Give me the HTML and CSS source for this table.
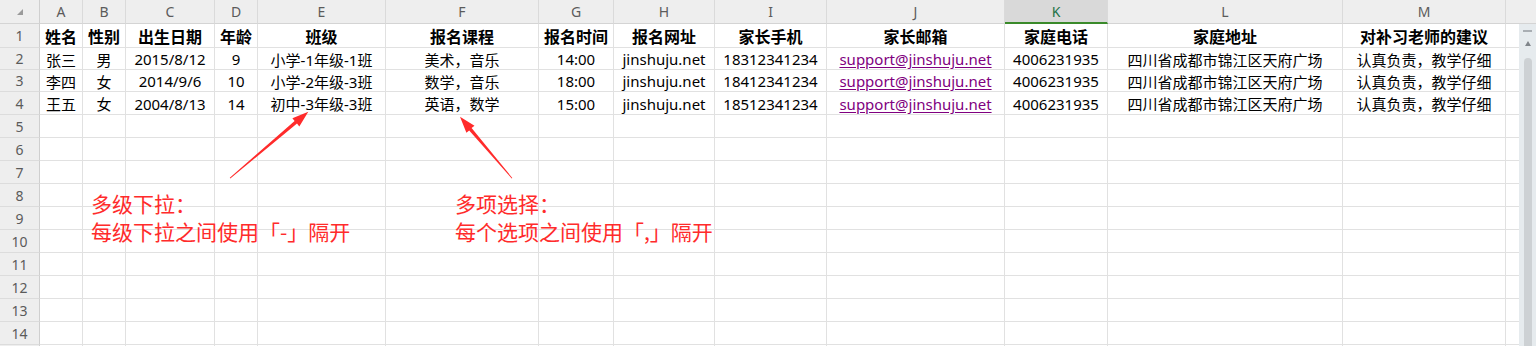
FILE: index.html
```html
<!DOCTYPE html>
<html lang="zh-CN">
<head>
<meta charset="utf-8">
<title>报名表</title>
<link rel="stylesheet" href="styles.css">
</head>
<body>
<div class="sheet">
  <div class="colhdr">
    <div class="corner"><svg width="8" height="8" viewBox="0 0 8 8"><polygon points="1,7 7,7 7,1" fill="#9a9a9a"/></svg></div>
    <div class="h">A</div><div class="h">B</div><div class="h">C</div><div class="h">D</div><div class="h">E</div><div class="h">F</div><div class="h">G</div><div class="h">H</div><div class="h">I</div><div class="h">J</div><div class="h sel">K</div><div class="h">L</div><div class="h">M</div><div class="h end"></div>
  </div>
  <div class="body">
    <div class="rows">
      <div class="row r1 bold"><div class="rn">1</div><div class="c">姓名</div><div class="c">性别</div><div class="c">出生日期</div><div class="c">年龄</div><div class="c">班级</div><div class="c">报名课程</div><div class="c">报名时间</div><div class="c">报名网址</div><div class="c">家长手机</div><div class="c">家长邮箱</div><div class="c">家庭电话</div><div class="c">家庭地址</div><div class="c">对补习老师的建议</div><div class="c"></div></div>
      <div class="row r2"><div class="rn">2</div><div class="c">张三</div><div class="c">男</div><div class="c">2015/8/12</div><div class="c">9</div><div class="c">小学-1年级-1班</div><div class="c">美术，音乐</div><div class="c">14:00</div><div class="c">jinshuju.net</div><div class="c">18312341234</div><div class="c"><span class="link">support@jinshuju.net</span></div><div class="c">4006231935</div><div class="c">四川省成都市锦江区天府广场</div><div class="c">认真负责，教学仔细</div><div class="c"></div></div>
      <div class="row r3"><div class="rn">3</div><div class="c">李四</div><div class="c">女</div><div class="c">2014/9/6</div><div class="c">10</div><div class="c">小学-2年级-3班</div><div class="c">数学，音乐</div><div class="c">18:00</div><div class="c">jinshuju.net</div><div class="c">18412341234</div><div class="c"><span class="link">support@jinshuju.net</span></div><div class="c">4006231935</div><div class="c">四川省成都市锦江区天府广场</div><div class="c">认真负责，教学仔细</div><div class="c"></div></div>
      <div class="row"><div class="rn">4</div><div class="c">王五</div><div class="c">女</div><div class="c">2004/8/13</div><div class="c">14</div><div class="c">初中-3年级-3班</div><div class="c">英语，数学</div><div class="c">15:00</div><div class="c">jinshuju.net</div><div class="c">18512341234</div><div class="c"><span class="link">support@jinshuju.net</span></div><div class="c">4006231935</div><div class="c">四川省成都市锦江区天府广场</div><div class="c">认真负责，教学仔细</div><div class="c"></div></div>
      <div class="row"><div class="rn">5</div><div class="c"></div><div class="c"></div><div class="c"></div><div class="c"></div><div class="c"></div><div class="c"></div><div class="c"></div><div class="c"></div><div class="c"></div><div class="c"></div><div class="c"></div><div class="c"></div><div class="c"></div><div class="c"></div></div>
      <div class="row"><div class="rn">6</div><div class="c"></div><div class="c"></div><div class="c"></div><div class="c"></div><div class="c"></div><div class="c"></div><div class="c"></div><div class="c"></div><div class="c"></div><div class="c"></div><div class="c"></div><div class="c"></div><div class="c"></div><div class="c"></div></div>
      <div class="row"><div class="rn">7</div><div class="c"></div><div class="c"></div><div class="c"></div><div class="c"></div><div class="c"></div><div class="c"></div><div class="c"></div><div class="c"></div><div class="c"></div><div class="c"></div><div class="c"></div><div class="c"></div><div class="c"></div><div class="c"></div></div>
      <div class="row"><div class="rn">8</div><div class="c"></div><div class="c"></div><div class="c"></div><div class="c"></div><div class="c"></div><div class="c"></div><div class="c"></div><div class="c"></div><div class="c"></div><div class="c"></div><div class="c"></div><div class="c"></div><div class="c"></div><div class="c"></div></div>
      <div class="row"><div class="rn">9</div><div class="c"></div><div class="c"></div><div class="c"></div><div class="c"></div><div class="c"></div><div class="c"></div><div class="c"></div><div class="c"></div><div class="c"></div><div class="c"></div><div class="c"></div><div class="c"></div><div class="c"></div><div class="c"></div></div>
      <div class="row"><div class="rn">10</div><div class="c"></div><div class="c"></div><div class="c"></div><div class="c"></div><div class="c"></div><div class="c"></div><div class="c"></div><div class="c"></div><div class="c"></div><div class="c"></div><div class="c"></div><div class="c"></div><div class="c"></div><div class="c"></div></div>
      <div class="row"><div class="rn">11</div><div class="c"></div><div class="c"></div><div class="c"></div><div class="c"></div><div class="c"></div><div class="c"></div><div class="c"></div><div class="c"></div><div class="c"></div><div class="c"></div><div class="c"></div><div class="c"></div><div class="c"></div><div class="c"></div></div>
      <div class="row"><div class="rn">12</div><div class="c"></div><div class="c"></div><div class="c"></div><div class="c"></div><div class="c"></div><div class="c"></div><div class="c"></div><div class="c"></div><div class="c"></div><div class="c"></div><div class="c"></div><div class="c"></div><div class="c"></div><div class="c"></div></div>
      <div class="row"><div class="rn">13</div><div class="c"></div><div class="c"></div><div class="c"></div><div class="c"></div><div class="c"></div><div class="c"></div><div class="c"></div><div class="c"></div><div class="c"></div><div class="c"></div><div class="c"></div><div class="c"></div><div class="c"></div><div class="c"></div></div>
      <div class="row"><div class="rn">14</div><div class="c"></div><div class="c"></div><div class="c"></div><div class="c"></div><div class="c"></div><div class="c"></div><div class="c"></div><div class="c"></div><div class="c"></div><div class="c"></div><div class="c"></div><div class="c"></div><div class="c"></div><div class="c"></div></div>
      <div class="row"><div class="rn"></div><div class="c"></div><div class="c"></div><div class="c"></div><div class="c"></div><div class="c"></div><div class="c"></div><div class="c"></div><div class="c"></div><div class="c"></div><div class="c"></div><div class="c"></div><div class="c"></div><div class="c"></div><div class="c"></div></div>
    </div>
    <div class="scrollbar">
      <div class="sb-dash"></div>
      <div class="sb-arrow"></div>
      <div class="sb-thumb"></div>
    </div>
  </div>

  <div class="note note-left">多级下拉：<br>每级下拉之间使用「-」隔开</div>
  <div class="note note-right">多项选择：<br>每个选项之间使用「,」隔开</div>

  <svg class="arrows" width="1536" height="346" viewBox="0 0 1536 346">
    <polygon fill="#ff2b2b" points="229.8,177.8 294.6,121.0 292.4,118.3 308.3,111.7 299.3,126.4 297.0,123.6 230.3,178.4"/>
    <polygon fill="#ff2b2b" points="512.3,177.9 471.6,128.0 474.5,125.7 460,116.7 466.4,132.7 469.2,130.5 511.7,178.4"/>
  </svg>
</div>
</body>
</html>
```
FILE: styles.css
```css
html, body {
  margin: 0;
  padding: 0;
  background: #ffffff;
}

body {
  width: 1536px;
  height: 346px;
  overflow: hidden;
  font-family: "Noto Sans", "Noto Sans CJK SC", sans-serif;
}

.sheet {
  position: relative;
  width: 1536px;
  height: 346px;
  overflow: hidden;
}

/* column header */
.colhdr {
  display: flex;
  height: 24px;
  background: #eeeeee;
}

.colhdr > * {
  box-sizing: border-box;
  height: 24px;
  border-right: 1px solid #dadada;
  border-bottom: 1px solid #d4d4d4;
  display: flex;
  align-items: center;
  justify-content: center;
  font-family: "Noto Sans", sans-serif;
  font-size: 14px;
  color: #5b5b5b;
  flex: none;
}

.colhdr .corner {
  border-right-color: #cfcfcf;
  align-items: flex-start;
  justify-content: flex-start;
  padding: 8px 0 0 16px;
}

.colhdr .sel {
  background: #d9d9d9;
  color: #217346;
  border-bottom: 2px solid #3a8a2a;
  padding-top: 1px;
}

.colhdr .end {
  border-right: none;
}

/* widths shared by header and rows */
.colhdr > :nth-child(1), .row > :nth-child(1) { width: 40px; }
.colhdr > :nth-child(2), .row > :nth-child(2) { width: 43px; }
.colhdr > :nth-child(3), .row > :nth-child(3) { width: 43px; }
.colhdr > :nth-child(4), .row > :nth-child(4) { width: 89px; }
.colhdr > :nth-child(5), .row > :nth-child(5) { width: 43px; }
.colhdr > :nth-child(6), .row > :nth-child(6) { width: 128px; }
.colhdr > :nth-child(7), .row > :nth-child(7) { width: 153px; }
.colhdr > :nth-child(8), .row > :nth-child(8) { width: 75px; }
.colhdr > :nth-child(9), .row > :nth-child(9) { width: 101px; }
.colhdr > :nth-child(10), .row > :nth-child(10) { width: 112px; }
.colhdr > :nth-child(11), .row > :nth-child(11) { width: 178px; }
.colhdr > :nth-child(12), .row > :nth-child(12) { width: 103px; }
.colhdr > :nth-child(13), .row > :nth-child(13) { width: 235px; }
.colhdr > :nth-child(14), .row > :nth-child(14) { width: 163px; }
.colhdr > :nth-child(15) { width: 30px; }
.row > :nth-child(15) { width: 13px; border-right: none; }

/* body */
.body {
  display: flex;
}

.rows {
  width: 1519px;
  display: flex;
  flex-direction: column;
}

.row {
  display: flex;
  height: 23px;
  flex: none;
}

.row.r1 { height: 24px; }
.row.r2, .row.r3 { height: 22px; }

.row > * {
  box-sizing: border-box;
  flex: none;
  height: 100%;
  display: flex;
  align-items: center;
  justify-content: center;
  white-space: nowrap;
  overflow: hidden;
}

.rn {
  background: #eeeeee;
  border-right: 1px solid #cfcfcf;
  border-bottom: 1px solid #dcdcdc;
  font-family: "Noto Sans", sans-serif;
  font-size: 14px;
  color: #5b5b5b;
}

.c {
  border-right: 1px solid #e1e1e1;
  border-bottom: 1px solid #e1e1e1;
  font-size: 15px;
  color: #000000;
  padding-top: 1px;
}

.row.bold .c {
  font-weight: 700;
  font-size: 16px;
}

.link {
  color: #800080;
  text-decoration: underline;
  text-underline-offset: 2px;
}

/* scrollbar */
.scrollbar {
  width: 17px;
  height: 322px;
  background: #e6ebee;
  position: relative;
  display: flex;
  flex-direction: column;
  align-items: center;
}

.sb-dash {
  width: 9px;
  height: 2px;
  background: #a9aeb3;
  margin-top: 6px;
}

.sb-arrow {
  width: 0;
  height: 0;
  border-left: 3px solid transparent;
  border-right: 3px solid transparent;
  border-bottom: 5px solid #80858a;
  margin-top: 9px;
}

.sb-thumb {
  width: 8px;
  flex: 1;
  margin-top: 12px;
  background: #cdd1d4;
  border-radius: 4px 4px 0 0;
}

/* annotations (text boxes floating over the sheet) */
.note {
  position: absolute;
  font-family: "Noto Sans CJK SC", sans-serif;
  font-size: 21px;
  line-height: 28px;
  color: #ff2b2b;
  white-space: nowrap;
}

.note-left {
  left: 91px;
  top: 189px;
}

.note-right {
  left: 455px;
  top: 189px;
}

.arrows {
  position: absolute;
  left: 0;
  top: 0;
  pointer-events: none;
}
```
